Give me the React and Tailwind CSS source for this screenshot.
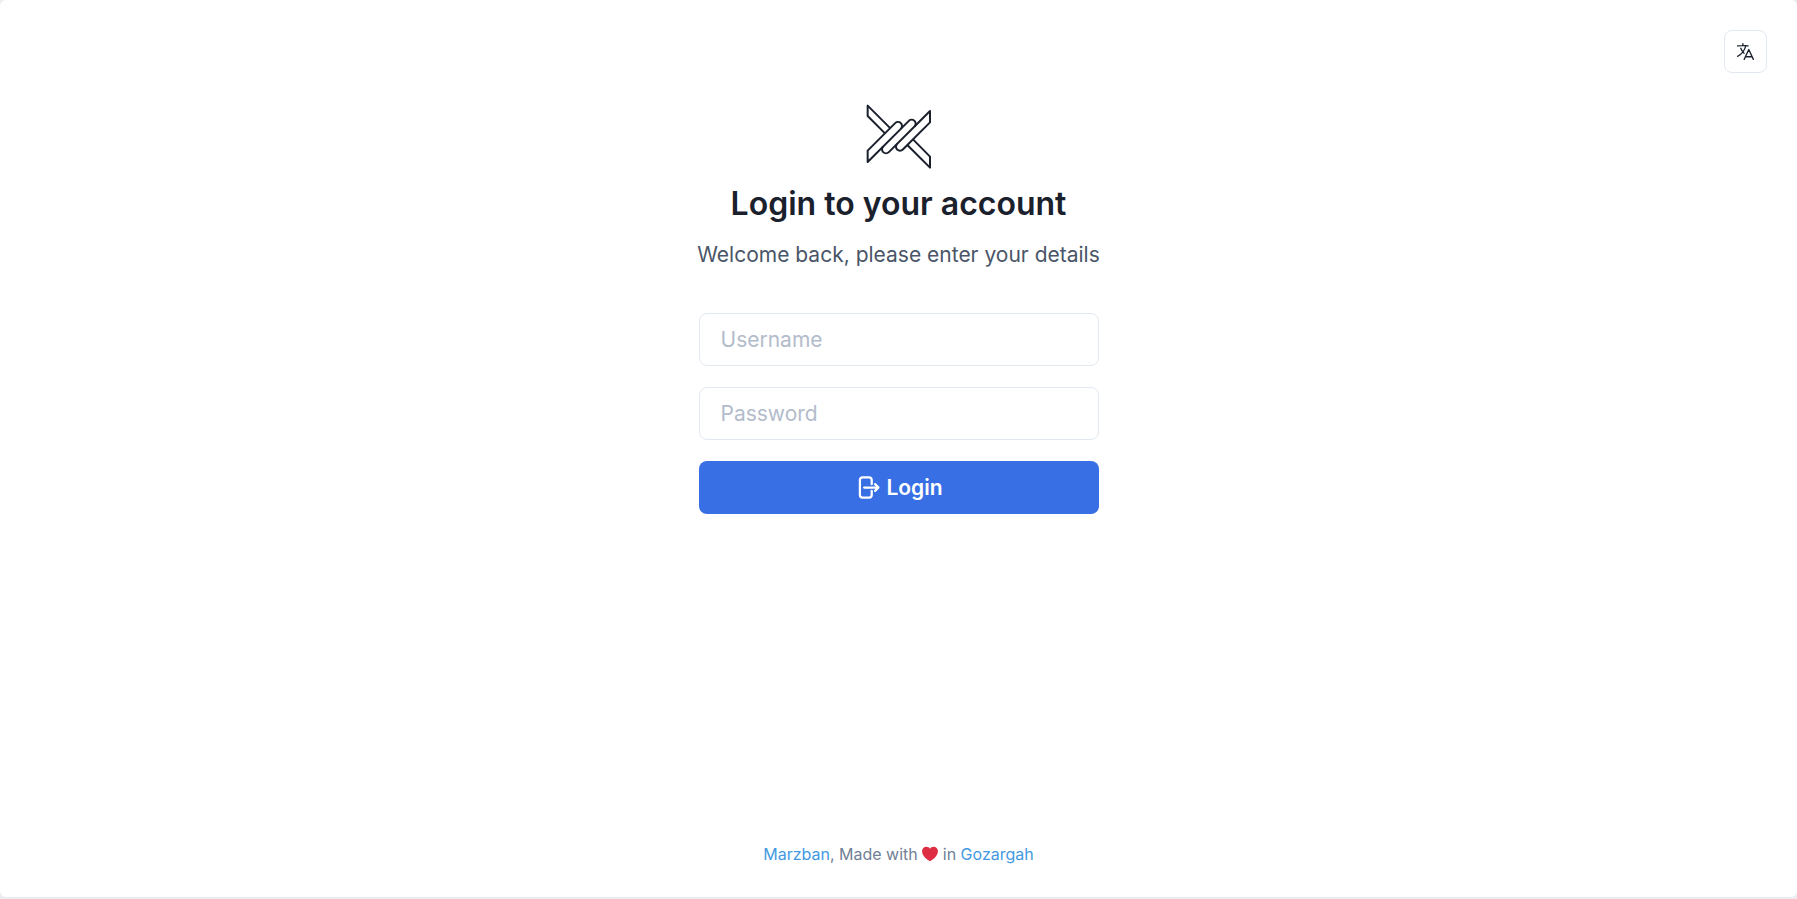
import React, { useState } from "react";
import { HiOutlineLanguage, HiOutlineArrowRightOnRectangle } from "react-icons/hi2";

const Logo = () => (
    <svg
        viewBox="48 43 195 195"
        className="w-[65px] h-[65px]"
        fill="none"
        stroke="currentColor"
        strokeWidth="6"
        strokeLinejoin="round"
        aria-hidden="true"
    >
        <path d="M120.5 115.5 53 48V79L105 131" />
        <path d="M172 166 240 234V201L189 149" />
        <path d="M53 217V183L135.5 100.5A12 12 0 0 1 152.5 117.5Z" />
        <path d="M152.5 117.5 176.5 93.5A12 12 0 0 1 193.5 110.5L116.5 187.5A12 12 0 0 1 99.5 170.5" />
        <path d="M193.5 110.5 240 64V98L158.5 179.5A12 12 0 0 1 141.5 162.5" />
    </svg>
);

const Heart = () => (
    <svg viewBox="0 0 36 36" className="inline-block w-4 h-4 align-[-2px]" role="img" aria-label="love">
        <path
            fill="#dd2e44"
            d="M35.885 11.833c0-5.45-4.418-9.868-9.867-9.868-3.308 0-6.227 1.633-8.018 4.129-1.791-2.496-4.71-4.129-8.017-4.129-5.45 0-9.868 4.417-9.868 9.868 0 .772.098 1.52.266 2.241C1.751 22.587 11.216 31.568 18 34.034c6.783-2.466 16.249-11.447 17.617-19.959.17-.721.268-1.469.268-2.242z"
        />
    </svg>
);

const inputClass =
    "w-full h-[53px] px-[21px] border border-[#e2e8f0] rounded-lg text-[21px] placeholder:text-[#b3bccb] focus:outline-none focus:ring";

const App = () => {
    const [username, setUsername] = useState("");
    const [password, setPassword] = useState("");

    return (
        <div className="min-h-screen flex flex-col bg-[#ebebf2] font-['Inter',sans-serif] text-[#1a202c]">
            <div className="flex-1 flex flex-col bg-white rounded-md mb-[2px] px-[30px] pt-[30px] pb-[31px]">
                <header className="flex justify-end">
                    <button
                        type="button"
                        aria-label="Change language"
                        className="w-[43px] h-[43px] flex items-center justify-center border border-[#e2e8f0] rounded-lg"
                    >
                        <HiOutlineLanguage className="w-[21px] h-[21px]" />
                    </button>
                </header>

                <main className="flex-1 flex flex-col items-center pt-[31px]">
                    <Logo />
                    <h1 className="mt-[13px] text-[32px] leading-[43px] font-semibold">Login to your account</h1>
                    <p className="mt-[14px] text-[21px] leading-8 text-[#4a5568]">Welcome back, please enter your details</p>

                    {/* Login Form */}
                    <form
                        className="w-full max-w-[400px] mt-[42px] flex flex-col gap-[21px]"
                        onSubmit={(e) => e.preventDefault()}
                    >
                        <input
                            type="text"
                            aria-label="Username"
                            placeholder="Username"
                            value={username}
                            onChange={(e) => setUsername(e.target.value)}
                            className={inputClass}
                        />
                        <input
                            type="password"
                            aria-label="Password"
                            placeholder="Password"
                            value={password}
                            onChange={(e) => setPassword(e.target.value)}
                            className={inputClass}
                        />
                        <button
                            type="submit"
                            className="w-full h-[53px] flex items-center justify-center gap-[5px] rounded-lg bg-[#396fe4] text-white text-[21px] font-semibold"
                        >
                            <HiOutlineArrowRightOnRectangle className="w-[27px] h-[27px]" strokeWidth={2} />
                            Login
                        </button>
                    </form>
                </main>

                <footer className="text-center text-base leading-6 text-[#718096]">
                    <a href="#marzban" className="text-[#4299e1]">Marzban</a>, Made with <Heart /> in{" "}
                    <a href="#gozargah" className="text-[#4299e1]">Gozargah</a>
                </footer>
            </div>
        </div>
    );
};

export default App;
